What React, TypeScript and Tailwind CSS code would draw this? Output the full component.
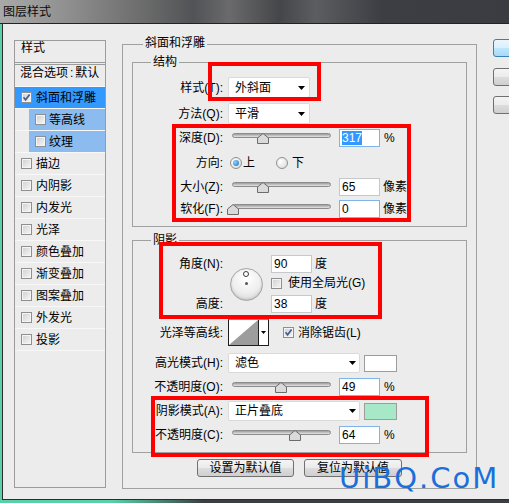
import React from "react";

const FONT = "font-['Liberation_Sans','Noto_Sans_CJK_SC',sans-serif]";

function Check({ checked = false, cls = "" }: { checked?: boolean; cls?: string }) {
  return (
    <span
      className={`flex h-[11px] w-[11px] shrink-0 items-center justify-center border border-[#8e8f8f] bg-[linear-gradient(135deg,#cfcfcf,#f7f7f7)] shadow-[inset_0_0_0_1px_#f4f4f4] ${cls}`}
    >
      {checked && (
        <svg width="9" height="9" viewBox="0 0 9 9">
          <path d="M1.5 4.2 L3.6 6.8 L7.6 1.4" fill="none" stroke="#4a5e8c" strokeWidth="1.7" />
        </svg>
      )}
    </span>
  );
}

function Radio({ on = false, cls = "" }: { on?: boolean; cls?: string }) {
  return (
    <span
      className={`flex h-[12px] w-[12px] shrink-0 items-center justify-center rounded-full border border-[#8e8f8f] bg-[radial-gradient(circle_at_35%_35%,#ffffff,#d6d6d6)] ${cls}`}
    >
      {on && <span className="h-[6px] w-[6px] rounded-full bg-[radial-gradient(circle_at_35%_35%,#8fd0ff,#1b6fb8)]" />}
    </span>
  );
}

function Slider({ at }: { at: number }) {
  return (
    <div className="relative ml-[9px] h-[18px] w-[99px] shrink-0">
      <div className="absolute inset-x-0 top-[4px] h-[5px] rounded-full border border-[#8c8c8c] bg-[linear-gradient(#9c9c9c,#e4e4e4)]" />
      <svg className="absolute top-[4px]" style={{ left: at }} width="12" height="11" viewBox="0 0 12 11">
        <path d="M6 0.5 L11.5 5 L11.5 10.5 L0.5 10.5 L0.5 5 Z" fill="#dadada" stroke="#6c6c6c" />
      </svg>
    </div>
  );
}

function Num({ v, sel = false, focus = false }: { v: string; sel?: boolean; focus?: boolean }) {
  return (
    <div
      className={`flex h-[18px] w-[41px] shrink-0 items-center border bg-white pl-[2px] ${
        focus ? "border-[#7eb4ea]" : "border-[#c6c8cc]"
      }`}
    >
      {sel ? <span className="bg-[#3399ff] text-white">{v}</span> : <span>{v}</span>}
    </div>
  );
}

function Drop({ text, cls }: { text: string; cls: string }) {
  return (
    <div className={`ml-[5px] flex shrink-0 items-center justify-between rounded-[2px] border border-[#dadada] bg-white pl-[6px] ${cls}`}>
      <span>{text}</span>
      <svg width="7" height="4" viewBox="0 0 7 4">
        <path d="M0 0 H7 L3.5 4 Z" fill="#000" />
      </svg>
    </div>
  );
}

function Row({ label, cls, children }: { label: string; cls: string; children?: React.ReactNode }) {
  return (
    <div className={`flex items-center ${cls}`}>
      <div className="w-[90px] shrink-0 text-right">{label}</div>
      {children}
    </div>
  );
}

function Item({ label, checked, sel, sub }: { label: string; checked?: boolean; sel?: boolean; sub?: boolean }) {
  if (sub) {
    return (
      <div className="h-[22px] border-b border-[#f8f8f8] pl-[14px]">
        <div className="flex h-full items-center gap-[3px] bg-[#8cbcef] pl-[6px]">
          <Check />
          <span>{label}</span>
        </div>
      </div>
    );
  }
  return (
    <div className={`flex h-[22px] items-center gap-[4px] border-b border-[#f8f8f8] pl-[6px] ${sel ? "bg-[#3399ff]" : ""}`}>
      <Check checked={checked} />
      <span>{label}</span>
    </div>
  );
}

const effects = ["描边", "内阴影", "内发光", "光泽", "颜色叠加", "渐变叠加", "图案叠加", "外发光", "投影"];

export default function App() {
  return (
    <div
      className={`relative h-[503px] w-[509px] overflow-hidden bg-[linear-gradient(to_right,#5ad0a8,#5ad0a8_22%,#3b3e42_40%)] text-[12px] leading-[14px] text-black ${FONT}`}
    >
      <div className="flex h-[24px] items-center border-b border-[#232323] bg-[linear-gradient(to_right,#a9a9a9,#929292_12%,#6c6c6c_28%,#525356_38%,#6a6a6c_45%,#454649_55%,#5c5d60_62%,#3c3e43_75%,#3a3c41)] pl-[3px]">
        <span className="text-[#0a0a0a]">图层样式</span>
      </div>

      <div className="ml-[2px] flex h-[476px] items-start border-b border-l border-[#2d2d2d] bg-[#ececec] pl-[11px] pt-[16px]">
        {/* style list */}
        <div className="h-[448px] w-[92px] shrink-0 border border-[#9b9b9b]">
          <div className="h-[22px] border-b border-[#9b9b9b] pl-[6px]">样式</div>
          <div className="h-[2px] border-b border-[#9b9b9b]" />
          <div className="flex h-[22px] items-start whitespace-nowrap border-b border-[#f8f8f8] pl-[5px] pt-[1px]">
            <span>混合选项</span>
            <span className="mx-[2px]">:</span>
            <span>默认</span>
          </div>
          <Item label="斜面和浮雕" checked sel />
          <Item label="等高线" sub />
          <Item label="纹理" sub />
          {effects.map((e) => (
            <Item key={e} label={e} />
          ))}
        </div>

        {/* bevel & emboss */}
        <div className="relative ml-[16px] mt-[4px] h-[445px] w-[355px] shrink-0 border border-[#a0a0a0] pl-[9px]">
          <span className="absolute left-[20px] top-[-9px] bg-[#ececec] px-[2px]">斜面和浮雕</span>

          <div className="relative mt-[17px] h-[165px] w-[335px] border border-[#a0a0a0]">
            <span className="absolute left-[18px] top-[-8px] bg-[#ececec] px-[2px]">结构</span>
            <Row cls="mt-[14px] h-[21px]" label="样式(T):">
              <Drop text="外斜面" cls="h-[21px] w-[82px] pr-[4px]" />
            </Row>
            <Row cls="mt-[5px] h-[21px]" label="方法(Q):">
              <Drop text="平滑" cls="h-[21px] w-[82px] pr-[4px]" />
            </Row>
            <Row cls="mt-[5px] h-[18px]" label="深度(D):">
              <Slider at={25} />
              <div className="ml-[8px]">
                <Num v="317" sel focus />
              </div>
              <span className="ml-[4px]">%</span>
            </Row>
            <Row cls="mt-[7px] h-[18px]" label="方向:">
              <Radio on cls="ml-[7px]" />
              <span className="ml-[1px]">上</span>
              <Radio cls="ml-[21px]" />
              <span className="ml-[4px]">下</span>
            </Row>
            <Row cls="mt-[6px] h-[18px]" label="大小(Z):">
              <Slider at={25} />
              <div className="ml-[8px]">
                <Num v="65" />
              </div>
              <span className="ml-[3px]">像素</span>
            </Row>
            <Row cls="mt-[4px] h-[18px]" label="软化(F):">
              <Slider at={-5} />
              <div className="ml-[8px]">
                <Num v="0" focus />
              </div>
              <span className="ml-[3px]">像素</span>
            </Row>
          </div>

          <div className="relative mt-[13px] h-[213px] w-[335px] border border-[#a0a0a0]">
            <span className="absolute left-[18px] top-[-8px] bg-[#ececec] px-[2px]">阴影</span>
            <div className="mt-[14px] flex h-[58px] items-center">
              <div className="flex h-full w-[90px] shrink-0 flex-col justify-between">
                <div className="flex h-[18px] items-center justify-end">角度(N):</div>
                <div className="flex h-[18px] items-center justify-end">高度:</div>
              </div>
              <div className="relative ml-[7px] h-[33px] w-[33px] shrink-0 rounded-full border border-[#a5a5a5] bg-[radial-gradient(circle_at_50%_30%,#ffffff,#eeeeee_55%,#cdcdcd)] shadow-[inset_0_-1px_2px_#bdbdbd]">
                <span className="absolute left-[12px] top-[2px] h-[6px] w-[6px] rounded-full border border-[#3a3a3a] bg-white" />
                <span className="absolute left-[14px] top-[13px] h-[3px] w-[3px] rounded-full bg-[#555]" />
              </div>
              <div className="ml-[8px] flex flex-col">
                <div className="flex h-[18px] items-center">
                  <Num v="90" />
                  <span className="ml-[3px]">度</span>
                </div>
                <div className="mt-[1px] flex h-[18px] items-center">
                  <Check />
                  <span className="ml-[6px]">使用全局光(G)</span>
                </div>
                <div className="mt-[3px] flex h-[18px] items-center">
                  <Num v="38" />
                  <span className="ml-[3px]">度</span>
                </div>
              </div>
            </div>

            <Row cls="mt-[6px] h-[27px]" label="光泽等高线:">
              <div className="ml-[5px] flex h-[27px] w-[41px] shrink-0 border border-[#1e1e1e] border-t-[#8a8a8a] bg-white">
                <svg width="29" height="25" viewBox="0 0 29 25" className="shrink-0">
                  <path d="M0 25 L29 0 L29 25 Z" fill="#9d9d9d" />
                </svg>
                <div className="flex flex-1 items-center justify-center border-l border-[#1e1e1e]">
                  <svg width="5" height="3" viewBox="0 0 5 3">
                    <path d="M0 0 H5 L2.5 3 Z" fill="#000" />
                  </svg>
                </div>
              </div>
              <Check checked cls="ml-[14px]" />
              <span className="ml-[4px]">消除锯齿(L)</span>
            </Row>
            <Row cls="mt-[7px] h-[20px]" label="高光模式(H):">
              <Drop text="滤色" cls="h-[20px] w-[132px] pr-[3px]" />
              <div className="ml-[4px] h-[17px] w-[33px] shrink-0 border border-[#9c9c9c] bg-white" />
            </Row>
            <Row cls="mt-[5px] h-[18px]" label="不透明度(O):">
              <Slider at={43} />
              <div className="ml-[8px]">
                <Num v="49" focus />
              </div>
              <span className="ml-[4px]">%</span>
            </Row>
            <Row cls="mt-[5px] h-[20px]" label="阴影模式(A):">
              <Drop text="正片叠底" cls="h-[20px] w-[132px] pr-[3px]" />
              <div className="ml-[4px] h-[17px] w-[33px] shrink-0 border border-[#9c9c9c] bg-[#a7e8c9]" />
            </Row>
            <Row cls="mt-[5px] h-[18px]" label="不透明度(C):">
              <Slider at={57} />
              <div className="ml-[8px]">
                <Num v="64" focus />
              </div>
              <span className="ml-[4px]">%</span>
            </Row>
          </div>

          <div className="ml-[65px] mt-[6px] flex gap-[10px]">
            <button className="flex h-[18px] w-[97px] items-center justify-center rounded-[3px] border border-[#707070] bg-[linear-gradient(#f4f4f4,#ebebeb_50%,#dddddd_50%,#cfcfcf)]">
              设置为默认值
            </button>
            <button className="flex h-[18px] w-[98px] items-center justify-center rounded-[3px] border border-[#707070] bg-[linear-gradient(#f4f4f4,#ebebeb_50%,#dddddd_50%,#cfcfcf)]">
              复位为默认值
            </button>
          </div>
        </div>

        {/* dialog buttons, cut off at the window edge */}
        <div className="ml-[16px] mt-[-1px] flex shrink-0 flex-col">
          <div className="h-[18px] w-[70px] rounded-[3px] border border-[#3c7fb1] bg-[linear-gradient(#eaf6fd,#d9f0fc_50%,#bee6fd_50%,#a7d9f5)]" />
          <div className="mt-[11px] h-[18px] w-[70px] rounded-[3px] border border-[#707070] bg-[linear-gradient(#f4f4f4,#ebebeb_50%,#dddddd_50%,#cfcfcf)]" />
          <div className="mt-[10px] h-[18px] w-[70px] rounded-[3px] border border-[#707070] bg-[linear-gradient(#f4f4f4,#ebebeb_50%,#dddddd_50%,#cfcfcf)]" />
        </div>
      </div>

      {/* red annotation boxes */}
      <div className="absolute left-[208px] top-[62px] h-[39px] w-[113px] border-[4px] border-[#ff0000]" />
      <div className="absolute left-[172px] top-[124px] h-[98px] w-[239px] border-[4px] border-[#ff0000]" />
      <div className="absolute left-[159px] top-[242px] h-[77px] w-[223px] border-[4px] border-[#ff0000]" />
      <div className="absolute left-[151px] top-[396px] h-[61px] w-[278px] border-[4px] border-[#ff0000]" />

      {/* watermark */}
      <div className="absolute left-[339px] top-[464px] font-['DejaVu_Sans',sans-serif] text-[29px] leading-[29px] tracking-[2px] text-[#1a6fdc]">
        UiBQ.CoM
      </div>
    </div>
  );
}
